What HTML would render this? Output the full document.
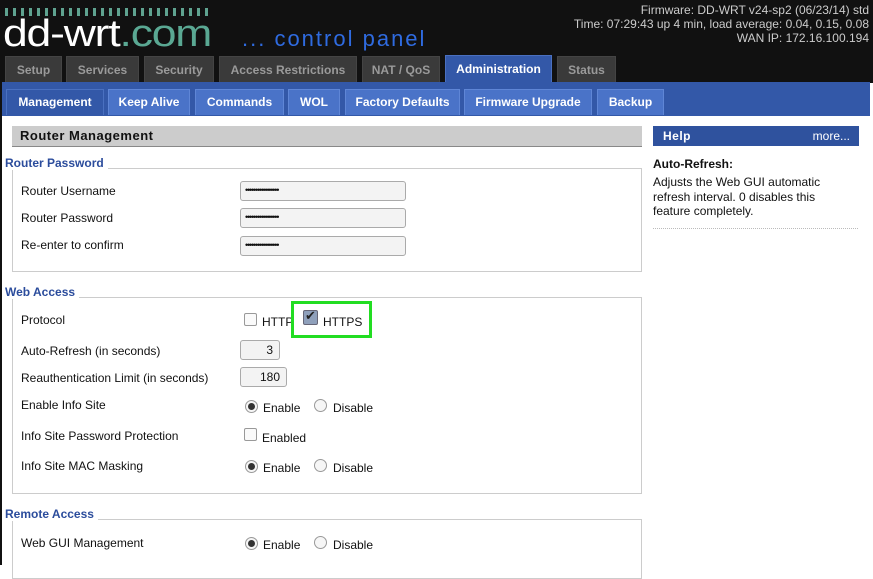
<!DOCTYPE html>
<html><head><style>
*{margin:0;padding:0;box-sizing:border-box}
body{width:873px;height:565px;overflow:hidden;background:#fff;font-family:"Liberation Sans",Arial,sans-serif;font-size:12px;position:relative;color:#111}
.a{position:absolute;white-space:nowrap}
#hdr{position:absolute;left:0;top:0;width:873px;height:83px;background:#111}
.tt{position:absolute;top:56px;height:27px;background:#3a3a3a;color:#9a9a9a;font-weight:bold;font-size:12px;text-align:center;line-height:27px;border:1px solid #444;border-bottom:none}
#bar{position:absolute;left:2px;top:82px;width:868px;height:34px;background:#3358a8}
.st{position:absolute;top:89px;height:26px;background:#4a73c8;color:#fff;font-weight:bold;font-size:12px;text-align:center;line-height:25px;border:1px solid #5f86d6;border-bottom:none}
.lg{position:absolute;left:5px;color:#2b4c9c;font-weight:bold;font-size:12px;background:#fff;padding-right:4px}
.fs{position:absolute;left:12px;width:630px;border:1px solid #ccc}
.lb{position:absolute;left:21px;font-size:12px}
.in{position:absolute;left:240px;width:166px;height:20px;border:1px solid #aaa;border-radius:3px;background:#f3f3f3;font-size:9px;line-height:17px;padding-left:4px;letter-spacing:-1.2px}
.nb{position:absolute;left:240px;height:20px;border:1px solid #aaa;border-radius:3px;background:#f3f3f3;text-align:right;padding-right:6px;line-height:18px}
.cb{position:absolute;width:13px;height:13px;border:1px solid #999;border-radius:2px;background:#fafafa}
.rd{position:absolute;width:13px;height:13px;border:1px solid #999;border-radius:50%;background:#f6f6f6}
.rd.on::after{content:"";position:absolute;left:2px;top:2px;width:7px;height:7px;border-radius:50%;background:#333}
</style></head><body>
<div style="position:absolute;left:0;top:0;width:2px;height:565px;background:#111"></div>
<div id="hdr">
<div class="a" style="left:5px;top:8px;width:205px;height:8px;background:repeating-linear-gradient(90deg,#5fa390 0 3px,transparent 3px 8px)"></div>
<div class="a" style="left:3px;top:13px;font-size:38px;color:#fff;letter-spacing:-1px;transform:scaleX(1.17);transform-origin:0 0">dd-wrt<span style="color:#5aa893">.com</span></div>
<div class="a" style="left:242px;top:26px;font-size:22px;color:#2f6be0;letter-spacing:2px">... control panel</div>
<div class="a" style="right:4px;top:3px;text-align:right;color:#ccc;font-size:12px;line-height:14px">Firmware: DD-WRT v24-sp2 (06/23/14) std<br>Time: 07:29:43 up 4 min, load average: 0.04, 0.15, 0.08<br>WAN IP: 172.16.100.194</div>
</div>
<div class="tt" style="left:5px;width:57px">Setup</div>
<div class="tt" style="left:66px;width:73px">Services</div>
<div class="tt" style="left:144px;width:70px">Security</div>
<div class="tt" style="left:219px;width:138px">Access Restrictions</div>
<div class="tt" style="left:362px;width:78px">NAT / QoS</div>
<div class="tt" style="left:445px;top:55px;height:28px;width:107px;background:#3358a8;color:#fff;border-color:#4a70c0">Administration</div>
<div class="tt" style="left:557px;width:59px">Status</div>
<div id="bar"></div>
<div class="st" style="left:6px;width:98px;background:#3358a8;border-color:#4a70c0">Management</div>
<div class="st" style="left:108px;width:82px">Keep Alive</div>
<div class="st" style="left:195px;width:89px">Commands</div>
<div class="st" style="left:288px;width:52px">WOL</div>
<div class="st" style="left:345px;width:115px">Factory Defaults</div>
<div class="st" style="left:464px;width:128px">Firmware Upgrade</div>
<div class="st" style="left:597px;width:67px">Backup</div>

<div class="a" style="left:12px;top:126px;width:630px;height:21px;background:#ccc;border-bottom:1px solid #888;font-weight:bold;font-size:13px;padding-left:8px;line-height:19px;letter-spacing:.5px">Router Management</div>

<div class="fs" style="top:168px;height:104px"></div>
<div class="lg" style="top:156px">Router Password</div>
<div class="lb" style="top:184px">Router Username</div>
<div class="lb" style="top:211px">Router Password</div>
<div class="lb" style="top:238px">Re-enter to confirm</div>
<div class="in" style="top:181px">•••••••••••••••••</div>
<div class="in" style="top:208px">•••••••••••••••••</div>
<div class="in" style="top:236px">•••••••••••••••••</div>

<div class="fs" style="top:297px;height:197px"></div>
<div class="lg" style="top:285px">Web Access</div>
<div class="lb" style="top:313px">Protocol</div>
<div class="lb" style="top:344px">Auto-Refresh (in seconds)</div>
<div class="lb" style="top:371px">Reauthentication Limit (in seconds)</div>
<div class="lb" style="top:398px">Enable Info Site</div>
<div class="lb" style="top:429px">Info Site Password Protection</div>
<div class="lb" style="top:459px">Info Site MAC Masking</div>
<div class="cb" style="left:244px;top:313px"></div>
<div class="a" style="left:262px;top:315px">HTTP</div>
<div class="a" style="left:291px;top:301px;width:81px;height:37px;border:3px solid #22dd22;background:#fff"></div>
<div class="cb" style="left:303px;top:310px;width:15px;height:15px;background:#8fa0bb;border-color:#667"><span style="position:absolute;left:1px;top:-3px;font-size:13px;color:#222">✔</span></div>
<div class="a" style="left:323px;top:315px">HTTPS</div>
<div class="nb" style="left:240px;top:340px;width:40px">3</div>
<div class="nb" style="left:240px;top:367px;width:47px">180</div>
<div class="rd on" style="left:245px;top:400px"></div><div class="a" style="left:263px;top:401px">Enable</div>
<div class="rd" style="left:314px;top:399px"></div><div class="a" style="left:333px;top:401px">Disable</div>
<div class="cb" style="left:244px;top:428px"></div><div class="a" style="left:262px;top:431px">Enabled</div>
<div class="rd on" style="left:245px;top:460px"></div><div class="a" style="left:263px;top:461px">Enable</div>
<div class="rd" style="left:314px;top:459px"></div><div class="a" style="left:333px;top:461px">Disable</div>

<div class="fs" style="top:519px;height:60px"></div>
<div class="lg" style="top:507px">Remote Access</div>
<div class="lb" style="top:536px">Web GUI Management</div>
<div class="rd on" style="left:245px;top:537px"></div><div class="a" style="left:263px;top:538px">Enable</div>
<div class="rd" style="left:314px;top:536px"></div><div class="a" style="left:333px;top:538px">Disable</div>

<div class="a" style="left:653px;top:126px;width:206px;height:20px;background:#2f529e;color:#fff;font-weight:bold;font-size:12px;line-height:20px;padding-left:10px;letter-spacing:.5px">Help<span style="position:absolute;right:9px;font-weight:normal;letter-spacing:0">more...</span></div>
<div class="a" style="left:653px;top:157px;font-weight:bold">Auto-Refresh:</div>
<div class="a" style="left:653px;top:175px;line-height:14.5px">Adjusts the Web GUI automatic<br>refresh interval. 0 disables this<br>feature completely.</div>
<div class="a" style="left:653px;top:228px;width:205px;border-top:1px dotted #bbb"></div>
</body></html>
